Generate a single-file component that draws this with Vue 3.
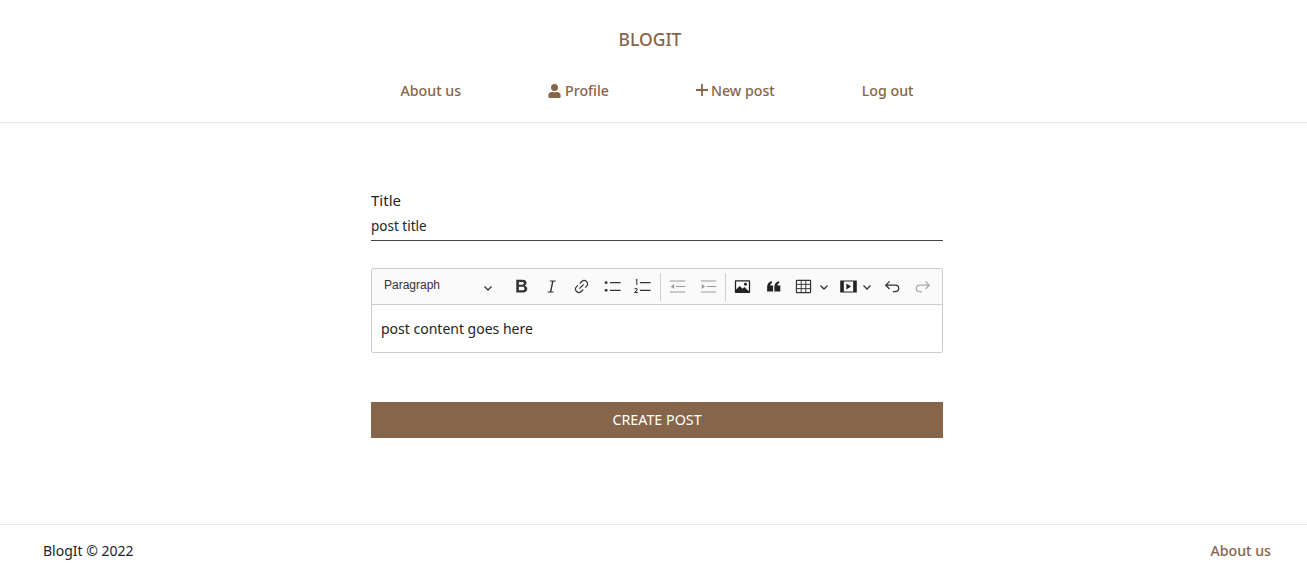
<template>
  <div class="page">
    <header class="top">
      <h1 class="brand">BLOGIT</h1>
      <nav class="menu">
        <a class="link">About us</a>
        <a class="link link-user">
          <svg class="ico-user" viewBox="0 0 448 512"><path d="M224 256a128 128 0 1 0 0-256 128 128 0 0 0 0 256zm89.600 32h-16.700a174.100 174.100 0 0 1-145.800 0h-16.700A134.400 134.400 0 0 0 0 422.400V464a48 48 0 0 0 48 48h352a48 48 0 0 0 48-48v-41.600A134.400 134.400 0 0 0 313.600 288z" fill="currentColor"/></svg>
          Profile
        </a>
        <a class="link">
          <svg class="ico-plus" viewBox="0 0 12 12"><path d="M6 0v12M0 6h12" stroke="currentColor" stroke-width="1.800" fill="none"/></svg>
          New post
        </a>
        <a class="link">Log out</a>
      </nav>
    </header>

    <main class="content">
      <form class="post-form" @submit.prevent>
        <label class="lbl">Title</label>
        <div class="title-input">post title</div>

        <div class="editor">
          <div class="toolbar">
            <div class="para">
              <span>Paragraph</span>
              <svg class="chev" viewBox="0 0 10 10"><path d="M1.500 3.500 5 7l3.500-3.500" /></svg>
            </div>
            <button class="tb tb-b" type="button">
              <svg viewBox="0 0 20 20"><path d="M4.500 3h6.700c2.500 0 4.100 1.300 4.100 3.300 0 1.300-.7 2.300-1.900 2.800 1.700.4 2.700 1.700 2.700 3.300 0 2.400-1.800 3.900-4.500 3.900H4.500zm2.700 2.200v3h3.300c1.200 0 2-.6 2-1.500s-.8-1.500-2-1.500zm0 5.100v3.700h3.700c1.400 0 2.300-.7 2.300-1.900s-.9-1.800-2.300-1.800z" fill="#333" fill-rule="evenodd"/></svg>
            </button>
            <button class="tb" type="button">
              <svg viewBox="0 0 20 20"><path d="M8 2.800h7v1.300h-2.700L9.900 15.900h2.600v1.300h-7v-1.300h2.700l2.400-11.800H8z" fill="#333"/></svg>
            </button>
            <button class="tb" type="button">
              <svg viewBox="0 0 20 20"><g fill="none" stroke="#333" stroke-width="1.400"><path d="M8 6.500l2.700-2.700a3.300 3.300 0 0 1 4.700 0l.8.800a3.300 3.300 0 0 1 0 4.700l-2 2"/><path d="M12 13.500l-2.700 2.700a3.300 3.300 0 0 1-4.700 0l-.8-.8a3.300 3.300 0 0 1 0-4.700l2-2"/><path d="M7.500 12.500l5-5"/></g></svg>
            </button>
            <button class="tb" type="button">
              <svg viewBox="0 0 20 20"><circle cx="2.500" cy="5.500" r="1.700" fill="#333"/><circle cx="2.500" cy="14.500" r="1.700" fill="#333"/><path d="M7 5.500h12.500M7 14.500h12.500" stroke="#333" stroke-width="1.400"/></svg>
            </button>
            <button class="tb" type="button">
              <svg viewBox="0 0 20 20"><path d="M7 5.500h12.500M7 14.500h12.500" stroke="#333" stroke-width="1.400"/><path d="M2 2.500l1.300-.7v6.500M.8 13c1.600-1.200 3.500-.4 2.700 1.100l-2.500 2.900h3.600" fill="none" stroke="#333" stroke-width="1.200"/></svg>
            </button>
            <span class="sep"></span>
            <button class="tb" type="button">
              <svg viewBox="0 0 20 20"><path d="M1 3.500h18M8 10h11M1 16.500h18" stroke="#999" stroke-width="1.300"/><path d="M6 7v6L2 10z" fill="#999"/></svg>
            </button>
            <button class="tb" type="button">
              <svg viewBox="0 0 20 20"><path d="M1 3.500h18M8 10h11M1 16.500h18" stroke="#999" stroke-width="1.300"/><path d="M2 7v6l4-3z" fill="#999"/></svg>
            </button>
            <span class="sep"></span>
            <button class="tb" type="button">
              <svg viewBox="0 0 20 20"><path d="M2 2.500h16A1 1 0 0 1 19 3.500v13a1 1 0 0 1-1 1H2a1 1 0 0 1-1-1v-13a1 1 0 0 1 1-1zm.5 1.500v9.500l4.300-4.200 3.200 3.200 2.200-1.800 5.300 4.800V4z" fill="#222" fill-rule="evenodd"/><circle cx="13.500" cy="7.300" r="1.700" fill="#222"/></svg>
            </button>
            <button class="tb" type="button">
              <svg viewBox="0 0 20 20"><path d="M2.500 16V10.500C2.500 7 4.300 4.800 8 3.800l.6 1.700C6.800 6.300 6.200 7.300 6.200 8.800H9.500V16zM11 16V10.500c0-3.500 1.800-5.700 5.500-6.700l.6 1.700c-1.800.8-2.400 1.800-2.400 3.300H18V16z" fill="#222"/></svg>
            </button>
            <button class="tb tb-drop tb-table" type="button">
              <svg viewBox="0 0 20 20"><rect x="1.700" y="2.700" width="16.600" height="14.600" rx=".6" fill="none" stroke="#333" stroke-width="1.400"/><path d="M1.700 7.500h16.600M1.700 12.500h16.600M7.300 2.700v14.600M12.700 2.700v14.600" stroke="#333" stroke-width="1.100" fill="none"/></svg>
              <svg class="chev" viewBox="0 0 10 10"><path d="M1.500 3.500 5 7l3.500-3.500" /></svg>
            </button>
            <button class="tb tb-drop tb-media" type="button">
              <svg viewBox="0 0 20 20"><path d="M1 3.500h18v13H1z" fill="none" stroke="#222" stroke-width="1.400"/><path d="M1 3.500h3.500v13H1zM15.500 3.500H19v13h-3.500z" fill="#222"/><path d="M7.500 6.500v7l5.500-3.500z" fill="#222"/></svg>
              <svg class="chev" viewBox="0 0 10 10"><path d="M1.500 3.500 5 7l3.500-3.500" /></svg>
            </button>
            <button class="tb" type="button">
              <svg viewBox="0 0 20 20"><path d="M6.500 4 2 8.500 6.500 13M2 8.500h11c2.500 0 4.300 1.600 4.300 3.800S15.500 16 13 16h-2.500" fill="none" stroke="#333" stroke-width="1.500"/></svg>
            </button>
            <button class="tb" type="button">
              <svg viewBox="0 0 20 20"><path d="M13.500 4 18 8.500 13.500 13M18 8.500H7c-2.500 0-4.300 1.600-4.300 3.800S4.500 16 7 16h2.500" fill="none" stroke="#aaa" stroke-width="1.500"/></svg>
            </button>
          </div>
          <div class="body">post content goes here</div>
        </div>

        <button class="submit" type="submit">CREATE POST</button>
      </form>
    </main>

    <footer class="foot">
      <span>BlogIt © 2022</span>
      <a class="link">About us</a>
    </footer>
  </div>
</template>

<script setup>
// pagina estatica, no hay datos que cargar
</script>

<style>
body { background: #fff; }
</style>

<style scoped>
.page {
  width: 1307px;
  height: 579px;
  overflow: hidden;
  font-family: "Noto Sans", "Open Sans", sans-serif;
  color: #212529;
  display: flex;
  flex-direction: column;
}
.top {
  height: 123px;
  box-sizing: border-box;
  border-bottom: 1px solid #e9e9e9;
  display: flex;
  flex-direction: column;
  align-items: center;
}
.brand {
  margin: 27px 7px 0 0;
  font-size: 17.500px;
  line-height: 24px;
  font-weight: 500;
  color: #86654a;
}
.menu {
  margin-top: 30px;
  padding-left: 7px;
  display: flex;
  gap: 87px;
}
.link {
  font-size: 14.200px;
  line-height: 20px;
  font-weight: 500;
  color: #86654a;
  white-space: nowrap;
  display: flex;
  align-items: center;
  gap: 3px;
}
.link-user { gap: 4px; }
.ico-user { width: 13px; height: 14px; }
.ico-plus { width: 12px; height: 12px; margin-top: -2px; }
.content {
  flex: 1;
  padding: 67px 0 0 371px;
}
.post-form { width: 572px; }
.lbl {
  display: block;
  font-size: 15px;
  line-height: 20px;
}
.title-input {
  margin-top: 6px;
  height: 24px;
  font-size: 13.500px;
  line-height: 20px;
  border-bottom: 1px solid #444;
}
.editor {
  margin-top: 27px;
  height: 83px;
  border: 1px solid #cdcdcd;
  border-radius: 2px;
}
.toolbar {
  height: 35px;
  background: #fafafa;
  border-bottom: 1px solid #cdcdcd;
  display: flex;
  align-items: center;
  padding-left: 12px;
}
.para {
  width: 122px;
  flex: none;
  display: flex;
  justify-content: space-between;
  align-items: center;
  font-family: "Liberation Sans", Arial, sans-serif;
  font-size: 12px;
  color: #333;
  padding-right: 13px;
  box-sizing: border-box;
  margin-top: -3px;
}
.para .chev { margin-top: 6px; }
.tb {
  width: 30.400px;
  height: 30px;
  padding: 0;
  border: 0;
  background: none;
  display: flex;
  align-items: center;
  justify-content: center;
  flex: none;
}
.tb svg { width: 17px; height: 17px; }
.tb .chev { width: 10px; height: 10px; margin-left: 7px; }
.tb-drop { justify-content: flex-start; padding-left: 6px; box-sizing: border-box; }
.tb-table { width: 45.700px; }
.tb-media { width: 43px; }
.tb-media .chev { margin-left: 5px; }
.tb-b svg { width: 19px; height: 19px; }
.chev { width: 10px; height: 10px; }
.chev path { fill: none; stroke: #333; stroke-width: 1.300; }
.sep {
  width: 1px;
  height: 28px;
  margin: 0 1.500px 0 2px;
  background: #cdcdcd;
  flex: none;
}
.body {
  height: 47px;
  box-sizing: border-box;
  padding: 14px 9px 0;
  font-size: 14px;
  line-height: 20px;
}
.submit {
  display: block;
  width: 100%;
  height: 36px;
  margin-top: 49px;
  padding: 0 0 2px;
  border: 0;
  background: #86654a;
  color: #fff;
  font-family: inherit;
  font-size: 14.300px;
}
.foot {
  height: 55px;
  box-sizing: border-box;
  border-top: 1px solid #e9e9e9;
  padding: 0 36px 3px 43px;
  display: flex;
  justify-content: space-between;
  align-items: center;
  font-size: 14px;
}
</style>
